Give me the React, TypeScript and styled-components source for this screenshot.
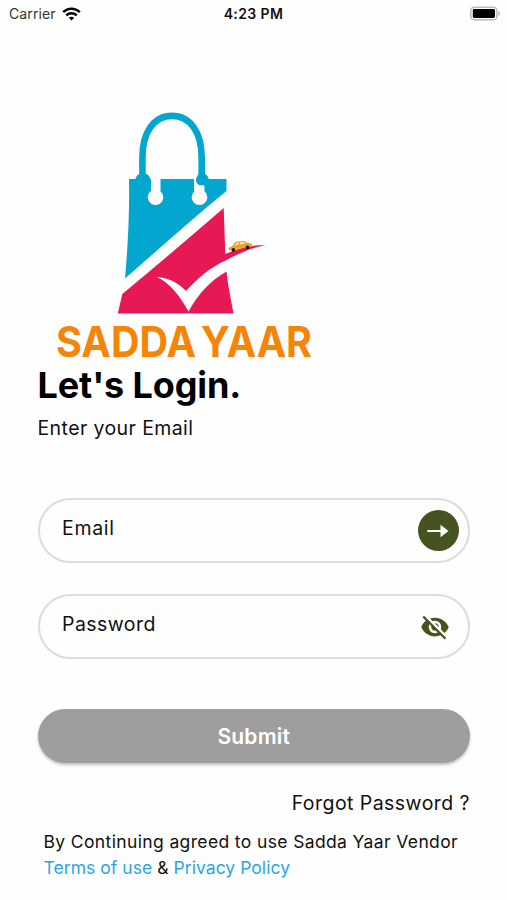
import React from "react";
import styled, { createGlobalStyle } from "styled-components";

const GlobalStyle = createGlobalStyle`
  * { box-sizing: border-box; }
  body { margin: 0; background: #fefefe; }
  button, input { font: inherit; }
`;

const Screen = styled.main`
  width: 507px;
  height: 900px;
  overflow: hidden;
  background: #fefefe;
  color: #111;
  font-family: Inter, "Open Sans", sans-serif;
`;

const StatusBar = styled.header`
  display: grid;
  grid-template-columns: 1fr auto 1fr;
  align-items: center;
  height: 28px;
  padding: 0 6px 0 9px;
  font-size: 14px;
  line-height: 28px;
`;

const Carrier = styled.div`
  display: flex;
  align-items: center;
  gap: 6px;
  color: #333;
  letter-spacing: 0.1px;
`;

const Clock = styled.div`
  margin-right: 3px;
  font-weight: 600;
  letter-spacing: 0.4px;
`;

const Battery = styled.div`
  display: flex;
  justify-content: flex-end;
`;

const Content = styled.div`
  display: flex;
  flex-direction: column;
  padding: 77px 37px 0 37.5px;
`;

const Logo = styled.svg`
  display: block;
  width: 282px;
  height: 258px;
  margin-left: 0.5px;
  overflow: visible;
`;

const Title = styled.h1`
  margin: 0;
  height: 44px;
  font-size: 36px;
  line-height: 44px;
  font-weight: 700;
  letter-spacing: -0.1px;
  color: #000;
`;

const Subtitle = styled.p`
  margin: 8px 0 0;
  height: 26px;
  font-size: 19.5px;
  line-height: 26px;
  letter-spacing: 0.4px;
`;

const Fields = styled.div`
  display: flex;
  flex-direction: column;
  gap: 31px;
  margin-top: 57px;
`;

const Field = styled.div<{ $end: number }>`
  display: flex;
  align-items: center;
  justify-content: space-between;
  height: 65px;
  padding: 0 ${(p) => p.$end}px 0 22.5px;
  border: 2px solid #dcdcdc;
  border-radius: 33px;
`;

const FieldLabel = styled.span<{ $spacing: number }>`
  padding-bottom: 5px;
  font-size: 19.5px;
  line-height: 26px;
  letter-spacing: ${(p) => p.$spacing}px;
`;

const ArrowButton = styled.button`
  display: grid;
  place-items: center;
  width: 41px;
  height: 41px;
  padding: 0;
  border: 0;
  border-radius: 50%;
  background: #46521f;
`;

const EyeButton = styled.button`
  display: block;
  width: 30px;
  height: 30px;
  padding: 0;
  border: 0;
  background: none;
  svg { display: block; }
`;

const Submit = styled.button`
  height: 54px;
  margin-top: 50px;
  padding: 0;
  border: 0;
  border-radius: 28px;
  background: #9e9e9e;
  box-shadow: 0 2px 3px rgba(0, 0, 0, 0.25);
  color: #fff;
  font-size: 21px;
  font-weight: 600;
  line-height: 53px;
  letter-spacing: 0.2px;
`;

const Forgot = styled.a`
  align-self: flex-end;
  margin-top: 27px;
  font-size: 19.5px;
  line-height: 26px;
  letter-spacing: 0.45px;
`;

const Terms = styled.p`
  margin: 13px 0 0 6px;
  font-size: 17.5px;
  line-height: 25.5px;
  white-space: nowrap;
`;

const TermsLine = styled.span<{ $spacing: number }>`
  display: block;
  letter-spacing: ${(p) => p.$spacing}px;
`;

const Link = styled.a`
  color: #29a7e5;
`;

const WifiIcon = () => (
  <svg width="19" height="14" viewBox="0 0 19 14" fill="none" stroke="#000" strokeWidth="2.4">
    <path d="M1.2 5.2C5.8.5 13.2.5 17.8 5.2" />
    <path d="M4.2 8.4c3-2.8 7.6-2.8 10.6 0" />
    <path d="M6.8 10.8c1.6-1.4 3.8-1.4 5.4 0L9.5 13.6Z" fill="#000" stroke="none" />
  </svg>
);

const BatteryIcon = () => (
  <svg width="31" height="16" viewBox="0 0 31 16">
    <rect x=".8" y="1.200" width="26.200" height="12.600" rx="3.600" fill="#fff" stroke="#bcbcbc" strokeWidth="1.600" />
    <rect x="2.800" y="3" width="22.200" height="9" rx="1.400" />
    <path d="M28.400 5.200c2.300.8 2.300 3.800 0 4.600Z" fill="#bcbcbc" />
  </svg>
);

const BagLogo = () => (
  <Logo viewBox="38 105 282 258" role="img" aria-label="Sadda Yaar">
    <path d="M129 179H226.500V191C193 218 159 249 125 278.500C127.800 246 129.600 216 129 179Z" fill="#03a6cf" />
    <path d="M151 178H160.500V191H151ZM194 178H204.500V191H194Z" fill="#fefefe" />
    <circle cx="155.500" cy="197.200" r="7.800" fill="#fefefe" />
    <circle cx="199.500" cy="197.200" r="7.800" fill="#fefefe" />
    <path d="M142.400 177V158C142.400 132 154 115.900 172 115.900S201.700 132 201.700 158V177" fill="none" stroke="#03a6cf" strokeWidth="6.600" />
    <path d="M135.500 180C135.500 176 139 173 143 173S150 176 150.500 180ZM196 179C197 175 199 173 202 173S208 175 209 180V186H204.500L203.500 184.800C200 186.500 195.500 184 196 179Z" fill="#03a6cf" />
    <path d="M223.700 208L225.300 254C238 248.500 252 245 265.500 245C250 248.500 237 254 225.500 260.500C210 267.500 198 278 186 291C178 282.500 168 277.500 156.500 277C169 282 180 296 188.500 311.500C198 294 210 281 226.500 271.500C228 286 231 300 233.500 313.500H117.800L122.300 294Q173 252 223.700 208Z" fill="#e71955" />
    <g transform="rotate(-10 240 247)">
      <path d="M228.500 246L233 244.500L236 241.300H244L248.500 244.500L252 245.500V248.500H228.500Z" fill="#eaa51f" />
      <path d="M234.700 244.500L237 242.300H239.500V244.500ZM240.500 242.300H243.500L246 244.500H240.500Z" fill="#fbe9bd" />
      <circle cx="233" cy="248.700" r="1.900" fill="#211b1b" />
      <circle cx="247.300" cy="248.700" r="1.900" fill="#211b1b" />
    </g>
    <g fill="#f58407" fontFamily="Inter, sans-serif" fontWeight="700" fontSize="42">
      <text x="56" y="356.500" textLength="140" lengthAdjust="spacingAndGlyphs">SADDA</text>
      <text x="201" y="356.500" textLength="111" lengthAdjust="spacingAndGlyphs">YAAR</text>
    </g>
  </Logo>
);

const ArrowIcon = () => (
  <svg width="22" height="14" viewBox="0 0 22 14" fill="#fff">
    <rect x="0" y="6" width="15" height="2" rx="1" />
    <path d="M13.500 .7L21.500 7L13.500 13.300Z" />
  </svg>
);

const EyeOffIcon = () => (
  <svg width="30" height="30" viewBox="0 0 24 24" fill="#46521f">
    <path d="M12 7c2.760 0 5 2.240 5 5 0 .65-.13 1.260-.36 1.830l2.920 2.920c1.510-1.260 2.700-2.890 3.430-4.750-1.730-4.390-6-7.500-11-7.500-1.400 0-2.740.25-3.980.7l2.160 2.160C10.740 7.130 11.350 7 12 7zM2 4.270l2.280 2.280.46.46C3.080 8.300 1.780 10.020 1 12c1.730 4.390 6 7.500 11 7.500 1.550 0 3.030-.3 4.380-.84l.42.42L19.730 22 21 20.730 3.270 3 2 4.270zM7.530 9.800l1.550 1.550c-.05.21-.08.43-.08.65 0 1.660 1.340 3 3 3 .22 0 .44-.03.65-.08l1.550 1.550c-.67.33-1.410.53-2.200.53-2.760 0-5-2.240-5-5 0-.79.2-1.530.53-2.200zm4.310-.78l3.150 3.150.02-.16c0-1.660-1.340-3-3-3l-.17.01z" />
  </svg>
);

export default function App() {
  return (
    <>
      <GlobalStyle />
      <Screen>
        <StatusBar>
          <Carrier>Carrier <WifiIcon /></Carrier>
          <Clock>4:23 PM</Clock>
          <Battery><BatteryIcon /></Battery>
        </StatusBar>
        <Content>
          <BagLogo />
          <Title>Let's Login.</Title>
          <Subtitle>Enter your Email</Subtitle>
          <Fields>
            <Field $end={9.5}>
              <FieldLabel $spacing={0.7}>Email</FieldLabel>
              <ArrowButton aria-label="Continue"><ArrowIcon /></ArrowButton>
            </Field>
            <Field $end={18.5}>
              <FieldLabel $spacing={0.45}>Password</FieldLabel>
              <EyeButton aria-label="Show password"><EyeOffIcon /></EyeButton>
            </Field>
          </Fields>
          <Submit>Submit</Submit>
          <Forgot>Forgot Password ?</Forgot>
          <Terms>
            <TermsLine $spacing={0.37}>By Continuing agreed to use Sadda Yaar Vendor</TermsLine>
            <TermsLine $spacing={0.05}><Link>Terms of use</Link> & <Link>Privacy Policy</Link></TermsLine>
          </Terms>
        </Content>
      </Screen>
    </>
  );
}
